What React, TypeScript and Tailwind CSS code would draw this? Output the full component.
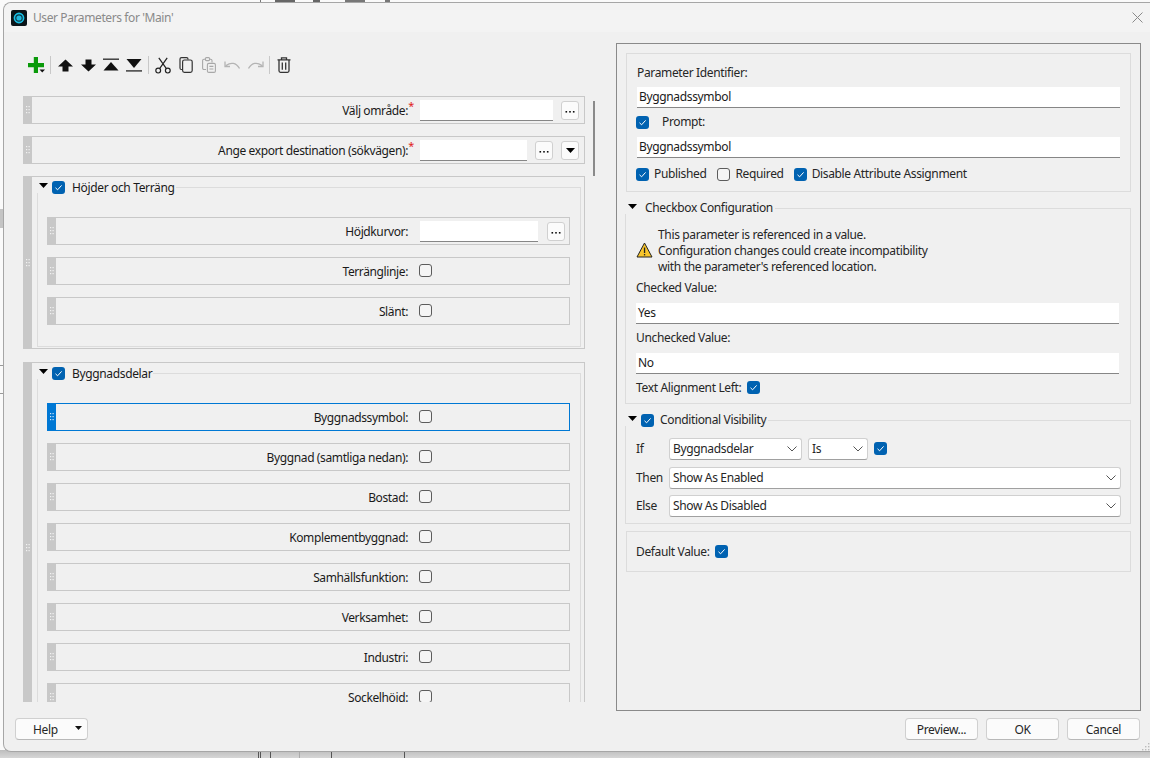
import React from "react";

const FONT = { fontFamily: '"Noto Sans", sans-serif' };

function Check({ on = true, cls = "" }: { on?: boolean; cls?: string }) {
  return on ? (
    <span className={`inline-flex w-[13px] h-[13px] shrink-0 rounded-[3px] bg-[#0062b1] items-center justify-center ${cls}`}>
      <svg width="9" height="9" viewBox="0 0 9 9" fill="none"><path d="M1.5 4.8 L3.6 6.8 L7.6 2.4" stroke="#fff" strokeWidth="1" /></svg>
    </span>
  ) : (
    <span className={`inline-block w-[13px] h-[13px] shrink-0 rounded-[3px] border border-[#5c5c5c] bg-[#f5f5f5] ${cls}`} />
  );
}

function Tri({ cls = "" }: { cls?: string }) {
  return (
    <svg width="9" height="5" viewBox="0 0 9 5" className={`shrink-0 ${cls}`}><path d="M0 0 H9 L4.5 5 Z" fill="#000" /></svg>
  );
}

function Handle({ blue = false }: { blue?: boolean }) {
  return (
    <div className={`w-[9px] shrink-0 flex items-center justify-center ${blue ? "bg-[#0078d4]" : "bg-[#c8c8c8]"}`}>
      <svg width="4" height="8" viewBox="0 0 4 8">
        {[0, 3, 6].map((y) => [0, 2.5].map((x) => (
          <rect key={`${x}-${y}`} x={x} y={y} width="1.2" height="1.2" fill={blue ? "#cfe6fa" : "#f2f2f2"} />
        )))}
      </svg>
    </div>
  );
}

function SmallBtn({ children }: { children?: React.ReactNode }) {
  return (
    <div className="w-[18px] h-[19px] shrink-0 rounded-[3px] border border-[#d0d0d0] bg-[#fbfbfb] flex items-center justify-center">
      {children}
    </div>
  );
}
const Dots = () => (
  <svg width="10" height="8" viewBox="0 0 10 8"><g fill="#111"><rect x="0.5" y="5" width="1.6" height="1.6" /><rect x="4.2" y="5" width="1.6" height="1.6" /><rect x="7.9" y="5" width="1.6" height="1.6" /></g></svg>
);

function Field({ w }: { w: string }) {
  return <div className={`${w} h-[21px] bg-white border-b border-[#868686] shrink-0`} />;
}

function Label({ text, req, w }: { text: string; req?: boolean; w: string }) {
  return (
    <div className={`${w} shrink-0 text-right text-[12px] text-[#1a1a1a] tracking-[-0.38px] pr-[6px] pt-[2px] relative`}>
      {text}
      {req && <span className="absolute right-0 top-[-2px] text-[#e02020] text-[11px]">*</span>}
    </div>
  );
}

function Row({ text, children, blue, labelW, req, cls = "" }: { text: string; children?: React.ReactNode; blue?: boolean; labelW: string; req?: boolean; cls?: string }) {
  return (
    <div className={`flex h-[28px] shrink-0 border-y border-r ${blue ? "border-[#0078d4]" : "border-[#c8c8c8]"} ${cls}`}>
      <Handle blue={blue} />
      <div className="flex items-center flex-1 min-w-0">
        <Label text={text} req={req} w={labelW} />
        {children}
      </div>
    </div>
  );
}

function CheckRow({ text, blue }: { text: string; blue?: boolean }) {
  return (
    <Row text={text} blue={blue} labelW="w-[358px]">
      <Check on={false} cls="ml-[5px] -mt-[2px]" />
    </Row>
  );
}

function Group({ title, children, cls = "" }: { title: string; children: React.ReactNode; cls?: string }) {
  return (
    <div className={`flex border-y border-r border-[#c8c8c8] shrink-0 ${cls}`}>
      <Handle />
      <div className="flex-1 pt-[2px] pl-[5px] pr-[3px] pb-[1px] flex flex-col">
        <div className="flex items-center h-[16px] text-[12px] tracking-[-0.35px] text-[#1a1a1a]">
          <Tri cls="ml-[2px] -mt-[3px]" />
          <Check cls="ml-[4px]" />
          <span className="ml-[7px] pt-[1px]">{title}</span>
          <div className="flex-1 ml-[1px] self-end h-[8px] border-t border-r border-[#dcdcdc]" />
        </div>
        <div className="flex-1 -mt-[2px] flex flex-col gap-[12px] border-x border-b border-[#dcdcdc] pl-[9px] pr-[10px] pt-[24px] pb-[20px]">
          {children}
        </div>
      </div>
    </div>
  );
}

function Toolbar() {
  const sep = <div className="w-px h-[18px] bg-[#c8c8c8] shrink-0" />;
  return (
    <div className="h-[53px] shrink-0 pt-[10px] pl-[5px] flex items-start">
      <div className="flex items-center h-[24px]">
        <svg width="17" height="17" viewBox="0 0 17 17" className="shrink-0">
          <path d="M5.8 0 H10 V6 H16 V10.2 H10 V16 H5.8 V10.2 H0 V6 H5.8 Z" fill="#0a9a0a" />
          <path d="M11.5 12.6 H17 L14.25 15.6 Z" fill="#111" />
        </svg>
        <div className="w-[5px]" />{sep}<div className="w-[7px]" />
        <svg width="15" height="13" viewBox="0 0 15 13" className="shrink-0"><path d="M7.5 0.5 L15 7.5 H10.5 V12.5 H4.5 V7.5 H0 Z" fill="#111" /></svg>
        <div className="w-[8px]" />
        <svg width="15" height="13" viewBox="0 0 15 13" className="shrink-0"><path d="M7.5 12.5 L15 5.5 H10.5 V0.5 H4.5 V5.5 H0 Z" fill="#111" /></svg>
        <div className="w-[7px]" />
        <svg width="16" height="14" viewBox="0 0 16 14" className="shrink-0"><rect x="0" y="0.5" width="16" height="1.4" fill="#333" /><path d="M8 4 L15.5 12.5 H0.5 Z" fill="#111" /></svg>
        <div className="w-[7px]" />
        <svg width="16" height="14" viewBox="0 0 16 14" className="shrink-0"><rect x="0" y="12.2" width="16" height="1.4" fill="#333" /><path d="M8 10 L15.5 1 H0.5 Z" fill="#111" /></svg>
        <div className="w-[6px]" />{sep}<div className="w-[6px]" />
        <svg width="16" height="17" viewBox="0 0 16 17" fill="none" stroke="#222" strokeWidth="1.2" className="shrink-0">
          <circle cx="3.2" cy="13.6" r="2.4" /><circle cx="12.8" cy="13.6" r="2.4" />
          <path d="M4.6 11.6 L12.2 0.8 M11.4 11.6 L3.8 0.8" />
        </svg>
        <div className="w-[8px]" />
        <svg width="14" height="16" viewBox="0 0 14 16" fill="none" stroke="#333" strokeWidth="1.2" className="shrink-0">
          <path d="M3 12.5 H2.5 Q1 12.5 1 11 V2 Q1 0.6 2.5 0.6 H7.5 Q9 0.6 9 2 V2.6" />
          <rect x="3.6" y="3" width="9.6" height="12.4" rx="1.8" />
        </svg>
        <div className="w-[9px]" />
        <svg width="14" height="16" viewBox="0 0 14 16" fill="none" stroke="#a8a8a8" strokeWidth="1.1" className="shrink-0">
          <path d="M4 12.5 H2 Q0.6 12.5 0.6 11 V3.6 Q0.6 2.2 2 2.2 H3.4 M7.6 2.2 H8.6 Q10 2.2 10 3.6 V5.5" />
          <rect x="3.4" y="0.6" width="4.2" height="3" rx="1" />
          <rect x="5.4" y="6.4" width="8" height="9" rx="1.4" />
          <path d="M7.4 9.4 H11.4 M7.4 12 H11.4" />
        </svg>
        <div className="w-[8px]" />
        <svg width="16" height="10" viewBox="0 0 16 10" fill="none" stroke="#b4b4b4" strokeWidth="1.3" className="shrink-0"><path d="M15.5 8.5 C12 2.5 7 2 2 5.5 M1 1.5 V6.5 H6" /></svg>
        <div className="w-[8px]" />
        <svg width="16" height="10" viewBox="0 0 16 10" fill="none" stroke="#b4b4b4" strokeWidth="1.3" className="shrink-0"><path d="M0.5 8.5 C4 2.5 9 2 14 5.5 M15 1.5 V6.5 H10" /></svg>
        <div className="w-[5px]" />{sep}<div className="w-[7px]" />
        <svg width="14" height="16" viewBox="0 0 14 16" fill="none" stroke="#333" strokeWidth="1.3" className="shrink-0">
          <path d="M0.5 2.8 H13.5 M4.5 2.8 V0.8 H9.5 V2.8" />
          <path d="M2 3 V13.8 Q2 15.3 3.5 15.3 H10.5 Q12 15.3 12 13.8 V3" />
          <path d="M5.3 5.5 V12.8 M8.7 5.5 V12.8" />
        </svg>
      </div>
    </div>
  );
}

function Input({ value }: { value: string }) {
  return (
    <div className="h-[21px] w-[483px] bg-white border-b border-[#868686] pl-[2px] flex items-center text-[12px] tracking-[-0.35px] text-[#1a1a1a] shrink-0">
      {value}
    </div>
  );
}

function Text({ children, cls = "" }: { children: React.ReactNode; cls?: string }) {
  return <span className={`text-[12px] tracking-[-0.35px] text-[#262626] whitespace-nowrap ${cls}`}>{children}</span>;
}

function Chevron() {
  return <svg width="10" height="6" viewBox="0 0 10 6" fill="none" stroke="#555" className="shrink-0"><path d="M0.5 0.5 L5 5 L9.5 0.5" /></svg>;
}

function Select({ value, w }: { value: string; w: string }) {
  return (
    <div className={`${w} h-[22px] shrink-0 bg-white border border-[#d0d0d0] rounded-[3px] border-b-[#a0a0a0] flex items-center justify-between pl-[3px] pr-[4px]`}>
      <Text>{value}</Text>
      <Chevron />
    </div>
  );
}

function LegendRow({ title, check }: { title: string; check?: boolean }) {
  return (
    <div className="flex items-center h-[16px] -ml-px">
      <Tri cls="ml-[3px] -mt-[3px]" />
      {check && <Check cls="ml-[4px]" />}
      <Text cls={check ? "ml-[6px]" : "ml-[8px]"}>{title}</Text>
      <div className="flex-1 ml-[2px] self-end h-[8px] border-t border-r border-[#dcdcdc]" />
    </div>
  );
}

function RightPanel() {
  return (
    <div className="w-[525px] h-[668px] shrink-0 border border-[#8a8a8a] pt-[9px] px-[9px] flex flex-col">
      <div className="h-[139px] shrink-0 border border-[#dcdcdc] pl-[10px] pt-[10px] flex flex-col">
        <div className="h-[18px] flex items-center"><Text>Parameter Identifier:</Text></div>
        <div className="mt-[5px]"><Input value="Byggnadssymbol" /></div>
        <div className="h-[29px] flex items-center pb-[1px]">
          <Check cls="-ml-px" /><Text cls="ml-[13px]">Prompt:</Text>
        </div>
        <Input value="Byggnadssymbol" />
        <div className="h-[16px] mt-[8px] flex items-center">
          <Check cls="-ml-px" /><Text cls="ml-[5px]">Published</Text>
          <Check on={false} cls="ml-[11px]" /><Text cls="ml-[5px]">Required</Text>
          <Check cls="ml-[10px]" /><Text cls="ml-[5px]">Disable Attribute Assignment</Text>
        </div>
      </div>
      <div className="mt-[8px] shrink-0">
        <LegendRow title="Checkbox Configuration" />
        <div className="h-[190px] -mt-[2px] border-x border-b border-[#dcdcdc] pl-[10px] -ml-px flex flex-col">
          <div className="flex items-center mt-[13px]">
            <svg width="17" height="16" viewBox="0 0 17 16" className="shrink-0 -mt-[2px]">
              <path d="M8.5 1 L16 15 H1 Z" fill="#f8c52b" stroke="#222" strokeWidth="1" strokeLinejoin="round" />
              <rect x="7.9" y="5.5" width="1.3" height="5.5" fill="#222" /><rect x="7.9" y="12" width="1.3" height="1.4" fill="#222" />
            </svg>
            <div className="ml-[5px] flex flex-col leading-[16px]">
              <Text>This parameter is referenced in a value.</Text>
              <Text>Configuration changes could create incompatibility</Text>
              <Text>with the parameter's referenced location.</Text>
            </div>
          </div>
          <div className="h-[18px] mt-[4px] flex items-center"><Text>Checked Value:</Text></div>
          <div className="mt-[6px]"><Input value="Yes" /></div>
          <div className="h-[18px] mt-[5px] flex items-center"><Text>Unchecked Value:</Text></div>
          <div className="mt-[6px]"><Input value="No" /></div>
          <div className="h-[16px] mt-[6px] flex items-center"><Text>Text Alignment Left:</Text><Check cls="ml-[6px] -mt-[1px]" /></div>
        </div>
      </div>
      <div className="mt-[8px] shrink-0">
        <LegendRow title="Conditional Visibility" check />
        <div className="h-[98px] -mt-[2px] border-x border-b border-[#dcdcdc] pl-[10px] pr-[9px] -ml-px pt-[12px] flex flex-col">
          <div className="flex items-center">
            <Text cls="w-[33px]">If</Text>
            <Select value="Byggnadsdelar" w="w-[133px]" />
            <div className="w-[6px]" />
            <Select value="Is" w="w-[60px]" />
            <Check cls="ml-[6px] -mt-[2px]" />
          </div>
          <div className="flex items-center mt-[7px]"><Text cls="w-[33px]">Then</Text><Select value="Show As Enabled" w="w-[452px]" /></div>
          <div className="flex items-center mt-[6px]"><Text cls="w-[33px]">Else</Text><Select value="Show As Disabled" w="w-[452px]" /></div>
        </div>
      </div>
      <div className="mt-[7px] h-[41px] shrink-0 border border-[#dcdcdc] pl-[9px] flex items-center">
        <Text>Default Value:</Text><Check cls="ml-[5px] -mt-[1px]" />
      </div>
    </div>
  );
}

function FootBtn({ label }: { label: string }) {
  return (
    <div className="w-[73px] h-[22px] rounded-[4px] border border-[#d0d0d0] border-b-[#b8b8b8] bg-[#fbfbfb] flex items-center justify-center">
      <Text cls="pt-[1px]">{label}</Text>
    </div>
  );
}

export default function App() {
  return (
    <div style={FONT} className="w-[1150px] h-[758px] bg-[#fafafa] overflow-hidden relative">
      {/* slivers of the application behind the dialog */}
      <div className="absolute top-0 left-[260px] w-px h-[3px] bg-[#777]" />
      <div className="absolute top-0 left-[275px] w-[20px] h-[2px] bg-[#666]" />
      <div className="absolute top-0 left-[313px] w-[7px] h-[2px] bg-[#666]" />
      <div className="absolute top-0 left-[345px] w-[20px] h-[2px] bg-[#777]" />
      <div className="absolute top-0 left-[385px] w-[5px] h-[2px] bg-[#777]" />
      <div className="absolute top-[209px] left-0 w-[3px] h-[19px] bg-[#c4c4c4]" />
      <div className="absolute top-[365px] left-0 w-[3px] h-px bg-[#999]" />
      <div className="absolute top-[393px] left-0 w-[3px] h-px bg-[#999]" />
      <div className="absolute bottom-0 left-0 w-full h-[8px] bg-gradient-to-b from-[#bdbdbd] to-[#d6d6d6]" />
      <div className="absolute bottom-0 left-[258px] w-px h-[6px] bg-[#555]" />
      <div className="absolute bottom-0 left-[260px] w-px h-[6px] bg-[#555]" />
      <div className="absolute bottom-0 left-[270px] w-px h-[6px] bg-[#555]" />
      <div className="absolute bottom-0 left-[299px] w-px h-[6px] bg-[#aaa]" />
      <div className="absolute bottom-0 left-[331px] w-px h-[6px] bg-[#555]" />
      <div className="absolute bottom-0 left-[404px] w-px h-[6px] bg-[#555]" />
      <div className="ml-[3px] mt-[2px] relative w-[1147px] h-[750px] bg-[#f0f0f0] border-l border-b border-t border-[#a6a6a6] rounded-l-[8px] flex flex-col">
        <div className="h-[29px] shrink-0 flex items-center pl-[7px] pr-[6px] bg-[#f3f3f3] rounded-tl-[8px]">
          <div className="w-[16px] h-[16px] rounded-[2px] bg-[#0b1418] flex items-center justify-center">
            <svg width="12" height="12" viewBox="0 0 12 12"><circle cx="6" cy="6" r="4.6" fill="#0b3a48" stroke="#19c1e6" strokeWidth="1.6" /><circle cx="6" cy="6" r="2.6" fill="#1fb8de" /></svg>
          </div>
          <span className="ml-[6px] text-[12px] tracking-[-0.4px] text-[#8a8a8a]">User Parameters for 'Main'</span>
          <div className="flex-1" />
          <svg width="11" height="11" viewBox="0 0 11 11" stroke="#8a8a8a" className="mr-[1px]"><path d="M0.5 0.5 L10.5 10.5 M10.5 0.5 L0.5 10.5" /></svg>
        </div>
        <div className="flex pt-[11px] pl-[19px] h-[679px] shrink-0">
          <div className="w-[562px] shrink-0 flex flex-col">
            <Toolbar />
            <div className="h-[606px] overflow-hidden flex flex-col">
              <Row text="Välj område:" labelW="w-[382px]" req>
                <Field w="w-[133px] ml-[6px]" />
                <div className="w-[8px]" /><SmallBtn><Dots /></SmallBtn>
              </Row>
              <Row text="Ange export destination (sökvägen):" labelW="w-[382px]" req cls="mt-[12px]">
                <Field w="w-[107px] ml-[6px]" />
                <div className="w-[8px]" /><SmallBtn><Dots /></SmallBtn>
                <div className="w-[8px]" /><SmallBtn><Tri /></SmallBtn>
              </Row>
              <Group title="Höjder och Terräng" cls="mt-[12px] h-[173px]">
                <Row text="Höjdkurvor:" labelW="w-[358px]">
                  <Field w="w-[118px] ml-[6px]" />
                  <div className="w-[9px]" /><SmallBtn><Dots /></SmallBtn>
                </Row>
                <CheckRow text="Terränglinje:" />
                <CheckRow text="Slänt:" />
              </Group>
              <Group title="Byggnadsdelar" cls="mt-[13px]">
                <CheckRow text="Byggnadssymbol:" blue />
                <CheckRow text="Byggnad (samtliga nedan):" />
                <CheckRow text="Bostad:" />
                <CheckRow text="Komplementbyggnad:" />
                <CheckRow text="Samhällsfunktion:" />
                <CheckRow text="Verksamhet:" />
                <CheckRow text="Industri:" />
                <CheckRow text="Sockelhöjd:" />
              </Group>
            </div>
          </div>
          <div className="w-[2px] h-[75px] mt-[58px] ml-[8px] bg-[#8a8a8a] shrink-0" />
          <div className="w-[21px] shrink-0" />
          <RightPanel />
        </div>
        <div className="flex items-start pt-[7px] pl-[11px] pr-[10px] flex-1">
          <div className="w-[73px] h-[22px] rounded-[4px] border border-[#d0d0d0] border-b-[#b8b8b8] bg-[#fbfbfb] flex items-center relative">
            <Text cls="ml-[17px] pt-[1px]">Help</Text>
            <svg width="7" height="4" viewBox="0 0 7 4" className="absolute right-[5px] top-[7px]"><path d="M0 0 H7 L3.5 4 Z" fill="#111" /></svg>
          </div>
          <div className="flex-1" />
          <div className="flex gap-[8px]">
            <FootBtn label="Preview..." />
            <FootBtn label="OK" />
            <FootBtn label="Cancel" />
          </div>
        </div>
        <svg width="10" height="10" viewBox="0 0 10 10" className="absolute right-0 bottom-0">
          {[[8, 2], [5, 5], [8, 5], [2, 8], [5, 8], [8, 8]].map(([x, y]) => <rect key={`${x}${y}`} x={x} y={y} width="1.4" height="1.4" fill="#bbb" />)}
        </svg>
      </div>
    </div>
  );
}
